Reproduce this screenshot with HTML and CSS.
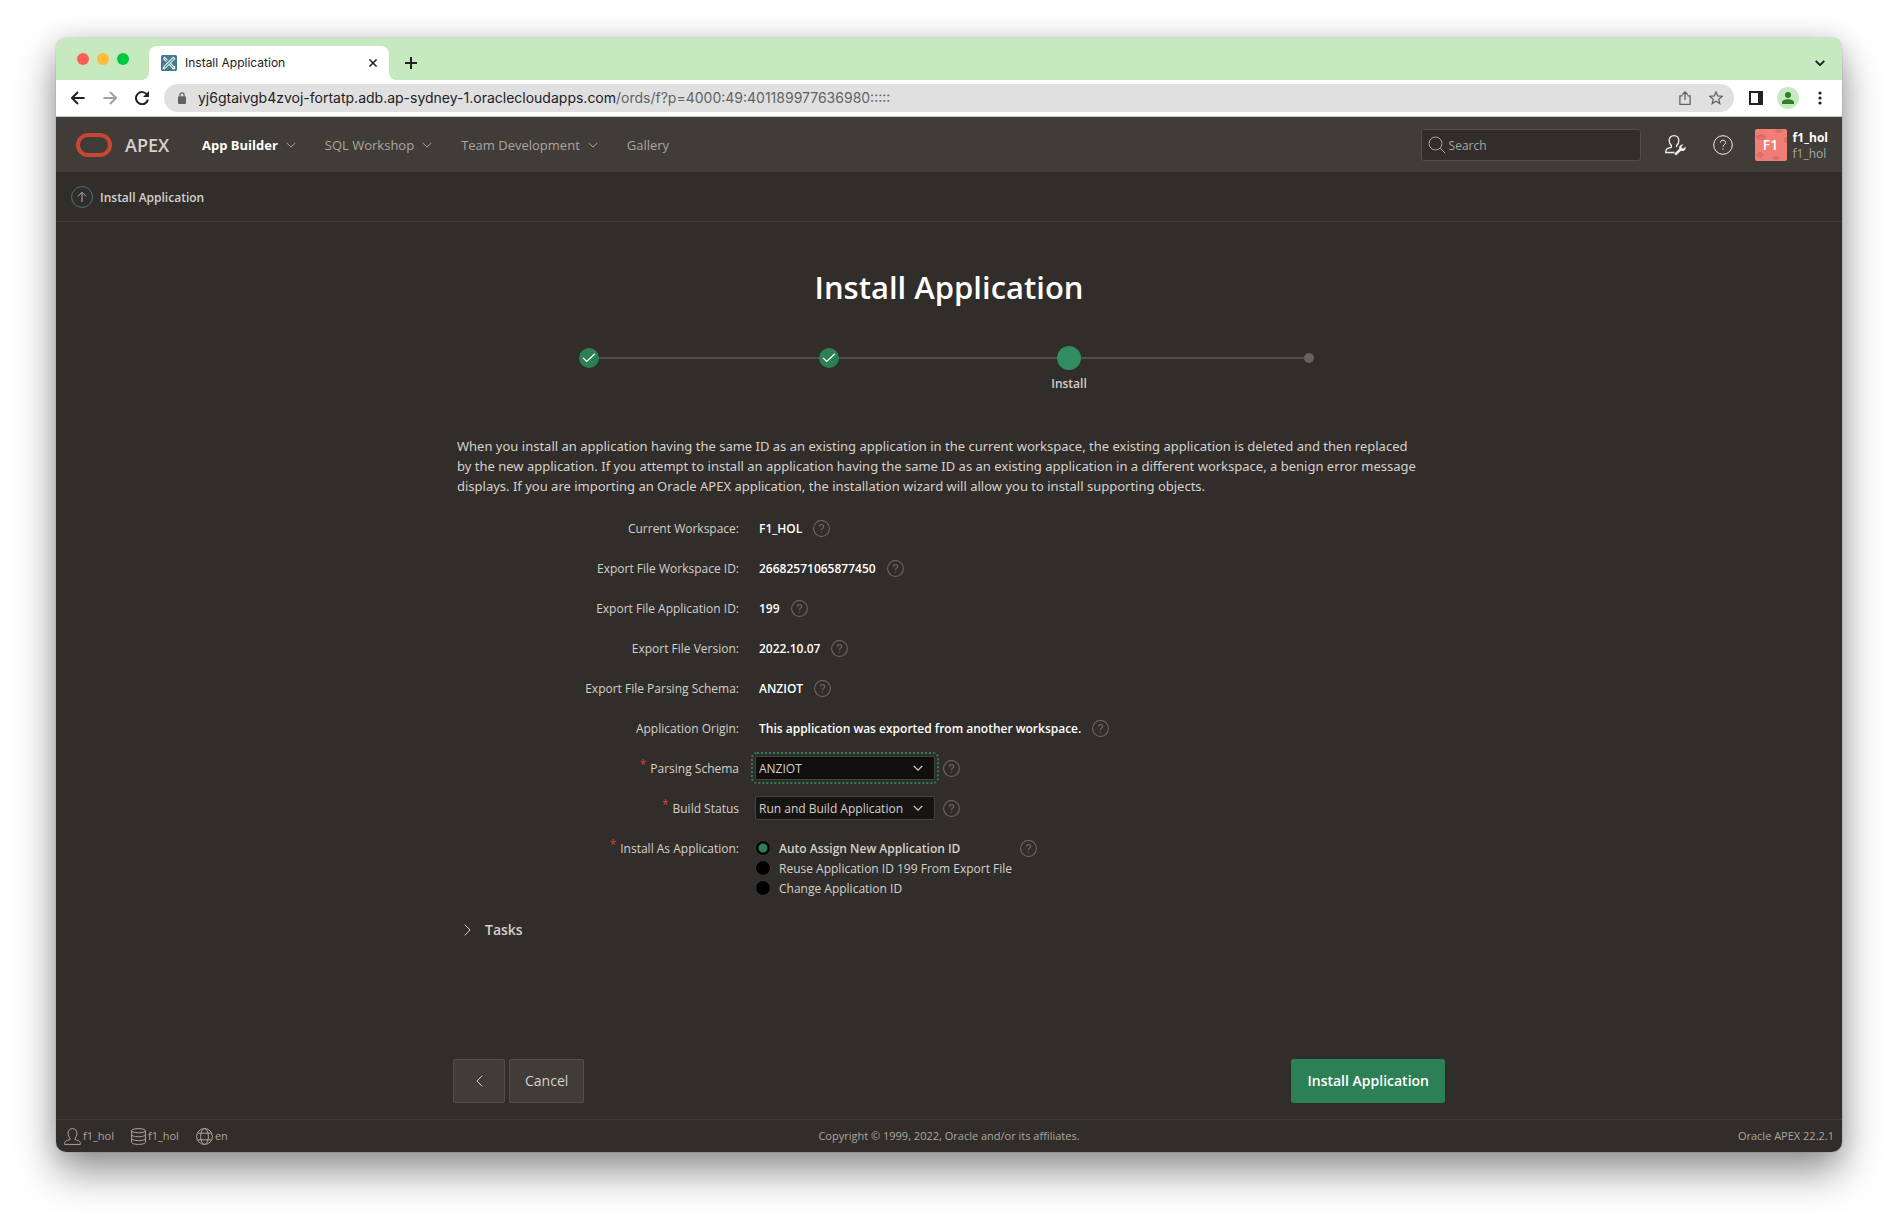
FILE: index.html
```html
<!DOCTYPE html>
<html lang="en">
<head>
<meta charset="utf-8">
<meta name="viewport" content="width=device-width, initial-scale=1">
<title>Install Application</title>
<link rel="stylesheet" href="styles.css">
</head>
<body>
<svg class="sprite" aria-hidden="true">
  <symbol id="i-help" viewBox="0 0 20 20"><circle cx="10" cy="10" r="9.3"/><path d="M7.4 7.7C7.4 6.2 8.5 5.2 10 5.2s2.6 1 2.6 2.4c0 1.9-2.6 2-2.6 4.1M10 13.6v1.2"/></symbol>
  <symbol id="i-down" viewBox="0 0 10 6"><path d="M.7.9 5 5.1 9.3.9"/></symbol>
</svg>
<div class="window">
  <div class="tabstrip">
    <div class="lights"><span class="light red"></span><span class="light amber"></span><span class="light green"></span></div>
    <div class="tab">
      <svg class="favicon" viewBox="0 0 16 16"><rect width="16" height="16" rx="1.5" fill="#457b8c"/><g fill="none" stroke="#e6f0f2" stroke-width="1.1"><path d="M2.4 3.6 3.6 2.4 6.6 5.4M9.6 8.4l4 4-1.2 1.2-4-4M5.4 6.6l-3-3M11 13.6h2.6V11M12.2 2.3l1.5 1.5-9 9-2.3.8.8-2.3zM2.4 12v1.6H4"/></g></svg>
      <span class="tab-title">Install Application</span>
      <button class="plain" aria-label="Close tab"><svg class="close" width="8" height="8" viewBox="0 0 8 8"><path d="m.4.4 7.200 7.200M7.600.4.4 7.600"/></svg></button>
    </div>
    <button class="plain new-tab" aria-label="New tab"><svg class="line" width="12" height="12" viewBox="0 0 12 12"><path d="M6 0v12M0 6h12"/></svg></button>
    <button class="plain tab-search" aria-label="Search tabs"><svg class="line" width="10" height="6" viewBox="0 0 10 6"><use href="#i-down"/></svg></button>
  </div>

  <div class="toolbar">
    <button class="plain nav-btn" aria-label="Back"><svg class="line" width="14" height="14" viewBox="0 0 14 14"><path d="M13.6 7H1.2M7 1 1 7l6 6"/></svg></button>
    <button class="plain nav-btn dim" aria-label="Forward"><svg class="line" width="14" height="14" viewBox="0 0 14 14"><path d="M.4 7h12.4M7 1l6 6-6 6"/></svg></button>
    <button class="plain nav-btn" aria-label="Reload"><svg class="line" width="14" height="14" viewBox="0 0 14 14"><path d="M12.4 4.2A6.1 6.1 0 1 0 13 8.6"/><path class="solid" d="M14 0v6H8z"/></svg></button>
    <div class="omnibox">
      <svg width="8" height="12" viewBox="0 0 8 12"><path fill="#5f6368" d="M1 4.2h6a1 1 0 0 1 1 1V11a1 1 0 0 1-1 1H1a1 1 0 0 1-1-1V5.200a1 1 0 0 1 1-1z"/><path fill="none" stroke="#5f6368" stroke-width="1.200" d="M1.900 4.500V2.900a2.100 2.100 0 0 1 4.200 0v1.600"/></svg>
      <div class="url">yj6gtaivgb4zvoj-fortatp.adb.ap-sydney-1.oraclecloudapps.com<span>/ords/f?p=4000:49:401189977636980:::::</span></div>
      <button class="plain" aria-label="Share"><svg class="thin" width="12" height="14" viewBox="0 0 12 14"><path d="M3.500 4.900H.9v8.400h10.200V4.900H8.500M6 9V1M3.200 3.700 6 .9l2.800 2.800"/></svg></button>
      <button class="plain" aria-label="Bookmark"><svg class="thin" width="14" height="14" viewBox="0 0 14 14"><path d="m7 1 1.700 4 4.400.4-3.300 2.900 1 4.300L7 10.300l-3.800 2.300 1-4.300L.9 5.400 5.300 5z"/></svg></button>
    </div>
    <div class="browser-actions">
      <button class="plain" aria-label="Side panel"><svg width="14" height="14" viewBox="0 0 14 14"><path fill="#202124" fill-rule="evenodd" d="M0 0h14v14H0zM2 2v10h7V2z"/></svg></button>
      <button class="plain profile" aria-label="Profile"><svg width="12" height="12" viewBox="0 0 12 12" fill="#317f2c"><circle cx="6" cy="3" r="3"/><path d="M0 12v-1.700C0 8.300 3 7.200 6 7.200s6 1.100 6 3.100V12z"/></svg></button>
      <button class="plain" aria-label="Menu"><svg width="4" height="14" viewBox="0 0 4 14" fill="#202124"><circle cx="2" cy="2" r="1.600"/><circle cx="2" cy="7" r="1.600"/><circle cx="2" cy="12" r="1.600"/></svg></button>
    </div>
  </div>

  <div class="app">
    <header class="header">
      <a class="brand" href="#"><svg width="36" height="24" viewBox="0 0 36 24"><rect x="2" y="2" width="32" height="20" rx="10" fill="none" stroke="#c74634" stroke-width="4"/></svg>APEX</a>
      <nav class="menu">
        <a href="#" class="active">App Builder<svg class="hair" width="10" height="6"><use href="#i-down"/></svg></a>
        <a href="#">SQL Workshop<svg class="hair" width="10" height="6"><use href="#i-down"/></svg></a>
        <a href="#">Team Development<svg class="hair" width="10" height="6"><use href="#i-down"/></svg></a>
        <a href="#">Gallery</a>
      </nav>
      <label class="search"><svg class="hair" width="18" height="18" viewBox="0 0 18 18"><circle cx="7.500" cy="7.500" r="6.500"/><path d="m12.200 12.200 5 5"/></svg><input type="search" placeholder="Search" aria-label="Search"></label>
      <button class="plain head-btn" aria-label="Administration"><svg width="22" height="22" viewBox="0 0 22 22"><path fill="none" stroke="currentColor" stroke-width="1.300" d="M10.500 18.500H1.700c0-3.400 1.200-4.200 5.600-5.200l.1-1.700C5.900 10.300 5.200 8.600 5.200 6.400c0-2.800 1.800-4.800 4.800-4.800s4.800 2 4.800 4.800c0 2.200-.7 3.900-2.200 5.200l.1 1.500"/><path fill="currentColor" d="m10.300 19.800 5-5a3.400 3.400 0 0 1 4.200-4.200l-2 2 .4 1.600 1.600.4 2-2a3.400 3.400 0 0 1-4.500 4.200l-5 4.800z"/></svg></button>
      <button class="plain head-btn" aria-label="Help"><svg class="hair" width="20" height="20"><use href="#i-help"/></svg></button>
      <div class="account">
        <span class="avatar">F1</span>
        <span class="names"><b>f1_hol</b><span>f1_hol</span></span>
      </div>
    </header>

    <div class="crumb">
      <a class="up" href="#" aria-label="Up"><svg width="22" height="22" viewBox="0 0 22 22" fill="none"><circle cx="11" cy="11" r="10.500" stroke="#41737f"/><path stroke="#b5b0ab" d="M11 16V6.500M7 10.300l4-4 4 4"/></svg></a>
      <b>Install Application</b>
    </div>

    <main class="wizard">
      <h1>Install Application</h1>
      <ol class="steps">
        <li><span class="dot done"><svg width="14" height="10" viewBox="0 0 14 10"><path d="M1 4.800 4.700 8.500 13 .7"/></svg></span></li>
        <li><span class="dot done"><svg width="14" height="10" viewBox="0 0 14 10"><path d="M1 4.800 4.700 8.500 13 .7"/></svg></span></li>
        <li><span class="dot current"></span><b>Install</b></li>
        <li><span class="dot"></span></li>
      </ol>
      <p class="intro">When you install an application having the same ID as an existing application in the current workspace, the existing application is deleted and then replaced<br>by the new application. If you attempt to install an application having the same ID as an existing application in a different workspace, a benign error message<br>displays. If you are importing an Oracle APEX application, the installation wizard will allow you to install supporting objects.</p>

      <form class="form">
        <div class="row"><span class="label">Current Workspace:</span><div class="field"><b>F1_HOL</b><button type="button" class="plain help" aria-label="Help"><svg width="17" height="17"><use href="#i-help"/></svg></button></div></div>
        <div class="row"><span class="label">Export File Workspace ID:</span><div class="field"><b>26682571065877450</b><button type="button" class="plain help" aria-label="Help"><svg width="17" height="17"><use href="#i-help"/></svg></button></div></div>
        <div class="row"><span class="label">Export File Application ID:</span><div class="field"><b>199</b><button type="button" class="plain help" aria-label="Help"><svg width="17" height="17"><use href="#i-help"/></svg></button></div></div>
        <div class="row"><span class="label">Export File Version:</span><div class="field"><b>2022.10.07</b><button type="button" class="plain help" aria-label="Help"><svg width="17" height="17"><use href="#i-help"/></svg></button></div></div>
        <div class="row"><span class="label">Export File Parsing Schema:</span><div class="field"><b>ANZIOT</b><button type="button" class="plain help" aria-label="Help"><svg width="17" height="17"><use href="#i-help"/></svg></button></div></div>
        <div class="row"><span class="label">Application Origin:</span><div class="field"><b>This application was exported from another workspace.</b><button type="button" class="plain help" aria-label="Help"><svg width="17" height="17"><use href="#i-help"/></svg></button></div></div>
        <div class="row"><label class="label" for="schema"><sup>*</sup>Parsing Schema</label><div class="field"><span class="select focused"><select id="schema"><option>ANZIOT</option></select><svg class="line" width="10" height="6"><use href="#i-down"/></svg></span><button type="button" class="plain help" aria-label="Help"><svg width="17" height="17"><use href="#i-help"/></svg></button></div></div>
        <div class="row"><label class="label" for="status"><sup>*</sup>Build Status</label><div class="field"><span class="select"><select id="status"><option>Run and Build Application</option></select><svg class="line" width="10" height="6"><use href="#i-down"/></svg></span><button type="button" class="plain help" aria-label="Help"><svg width="17" height="17"><use href="#i-help"/></svg></button></div></div>
        <div class="row" role="radiogroup" aria-labelledby="install-as">
          <span class="label" id="install-as"><sup>*</sup>Install As Application:</span>
          <div class="field">
            <div class="radios">
              <label><input type="radio" name="as" checked><span>Auto Assign New Application ID</span></label>
              <label><input type="radio" name="as"><span>Reuse Application ID 199 From Export File</span></label>
              <label><input type="radio" name="as"><span>Change Application ID</span></label>
            </div>
            <button type="button" class="plain help" aria-label="Help"><svg width="17" height="17"><use href="#i-help"/></svg></button>
          </div>
        </div>
      </form>

      <button class="plain tasks" aria-expanded="false"><svg class="hair" width="7" height="12" viewBox="0 0 7 12"><path d="m.8.7 5.300 5.300-5.300 5.300"/></svg>Tasks</button>

      <div class="actions">
        <button class="btn back" aria-label="Previous"><svg class="hair" width="7" height="12" viewBox="0 0 7 12"><path d="M6.200.7.9 6l5.300 5.300"/></svg></button>
        <button class="btn">Cancel</button>
        <button class="btn primary">Install Application</button>
      </div>
    </main>

    <footer class="footer">
      <div class="status">
        <span><svg width="17" height="17" viewBox="0 0 17 17"><path d="M.6 16.400h15.800c0-3-1-3.800-5.400-4.700V10c1.300-1.100 1.900-2.400 1.900-4.400C12.900 2.700 11.400.6 8.500.6S4.100 2.700 4.100 5.600c0 2 .6 3.300 1.900 4.400v1.700C1.600 12.600.6 13.400.6 16.400z"/></svg>f1_hol</span>
        <span><svg width="15" height="17" viewBox="0 0 15 17"><ellipse cx="7.500" cy="2.700" rx="6.900" ry="2.100"/><path d="M.6 2.700v11.600c0 1.200 3 2.100 6.900 2.100s6.900-.9 6.900-2.100V2.700M.6 6.600c0 1.200 3 2.100 6.900 2.100s6.900-.9 6.900-2.100M.6 10.500c0 1.200 3 2.100 6.900 2.100s6.900-.9 6.900-2.100"/></svg>f1_hol</span>
        <span><svg width="17" height="17" viewBox="0 0 17 17"><circle cx="8.500" cy="8.500" r="7.900"/><ellipse cx="8.500" cy="8.500" rx="3.900" ry="7.900"/><path d="M1.500 5.200h14M1.500 11.800h14"/></svg>en</span>
      </div>
      <div>Copyright © 1999, 2022, Oracle and/or its affiliates.</div>
      <div class="version">Oracle APEX 22.2.1</div>
    </footer>
  </div>
</div>
</body>
</html>
```
FILE: styles.css
```css
* { box-sizing: border-box; }

body {
  margin: 0;
  min-height: 100vh;
  padding: 38px 56px 74px;
  display: flex;
  flex-direction: column;
  background: #fff;
  font: 12px/20px "Open Sans", "Noto Sans", sans-serif;
}

svg { display: block; flex: none; }
.sprite { position: absolute; width: 0; height: 0; }
a { color: inherit; text-decoration: none; }
b { font-weight: 600; }
button, input, select { font: inherit; color: inherit; }

.plain {
  display: flex;
  align-items: center;
  justify-content: center;
  margin: 0;
  padding: 0;
  border: 0;
  background: none;
}

.line, .close, .thin, .hair { fill: none; stroke: currentColor; }
.line { stroke-width: 2; }
.close { stroke-width: 1.5; }
.thin { stroke-width: 1.3; }
.hair { stroke-width: 1; }
.solid { fill: currentColor; stroke: none; }

/* Browser window */
.window {
  flex: 1;
  display: flex;
  flex-direction: column;
  border-radius: 10px;
  overflow: hidden;
  box-shadow: 0 0 1px rgba(0, 0, 0, .5), 0 20px 40px rgba(0, 0, 0, .42), 0 0 24px rgba(0, 0, 0, .12);
}

.tabstrip {
  display: flex;
  align-items: center;
  height: 42px;
  padding: 8px 17px 0 21px;
  background: #c7e9c0;
  color: #202124;
  font-family: Inter, sans-serif;
}
.lights { display: flex; gap: 8px; width: 72px; padding-bottom: 8px; }
.light { width: 12px; height: 12px; border-radius: 50%; }
.red { background: #ff5d55; }
.amber { background: #ffbb3c; }
.green { background: #00c843; }

.tab {
  position: relative;
  display: flex;
  align-items: center;
  gap: 8px;
  width: 240px;
  height: 34px;
  padding: 0 12px;
  border-radius: 8px 8px 0 0;
  background: #fff;
}
.tab::before, .tab::after {
  content: "";
  position: absolute;
  bottom: 0;
  width: 8px;
  height: 8px;
}
.tab::before { left: -8px; background: radial-gradient(circle at 0 0, transparent 8px, #fff 8px); }
.tab::after { right: -8px; background: radial-gradient(circle at 100% 0, transparent 8px, #fff 8px); }
.favicon { width: 16px; height: 16px; }
.tab-title { flex: 1; }
.new-tab { margin-left: 16px; }
.tab-search { margin-left: auto; }

.toolbar {
  display: flex;
  align-items: center;
  height: 37px;
  padding: 0 20px 0 6px;
  border-bottom: 1px solid #c6c6c6;
  background: #fff;
  color: #202124;
}
.nav-btn { width: 32px; }
.dim { color: #a0a1a3; }
.omnibox {
  flex: 1;
  display: flex;
  align-items: center;
  gap: 18px;
  height: 28px;
  margin-left: 6px;
  padding: 0 11px 0 14px;
  border-radius: 14px;
  background: #e0e0e0;
  color: #5f6368;
}
.url { flex: 1; margin-left: -6px; color: #202124; font: 14px/20px Inter, sans-serif; }
.url span { color: #5f6368; }
.browser-actions { display: flex; align-items: center; gap: 14px; margin-left: 15px; }
.profile { width: 22px; height: 22px; margin-right: 5px; border-radius: 50%; background: #c7e9c0; }

/* Application */
.app { flex: 1; display: flex; flex-direction: column; background: #312d2a; color: #d5d1cd; }

.header {
  display: flex;
  align-items: center;
  height: 55px;
  padding: 0 14px 0 20px;
  background: #403c38;
}
.brand { display: flex; align-items: center; gap: 13px; width: 126px; font-size: 18px; font-weight: 600; }
.menu { display: flex; gap: 29px; flex: 1; color: #aaa6a2; font-size: 13px; }
.menu a { display: flex; align-items: center; gap: 8px; }
.menu .active { color: #fff; font-weight: 700; }
.menu svg { color: #aaa6a2; }
.search {
  display: flex;
  align-items: center;
  gap: 3px;
  width: 220px;
  height: 32px;
  margin-right: 23px;
  padding-left: 6px;
  border: 1px solid #524e49;
  border-radius: 3px;
  background: #312d2a;
  color: #aaa6a2;
}
.search input { width: 100%; padding: 2px 0 0; border: 0; background: none; outline: none; }
.search input::placeholder { color: #aaa6a2; opacity: 1; }
.head-btn { width: 22px; margin-right: 26px; color: #f1efed; }
.head-btn + .head-btn { margin-right: 21px; }
.account { display: flex; align-items: center; gap: 6px; }
.avatar {
  width: 32px;
  height: 32px;
  border-radius: 2px;
  background:
    radial-gradient(ellipse 5px 3px at 6px 8px, #dd6f69 95%, transparent),
    radial-gradient(ellipse 4px 2px at 24px 2px, #dd6f69 95%, transparent),
    radial-gradient(ellipse 4px 3px at 5px 26px, #dd6f69 95%, transparent),
    radial-gradient(ellipse 4px 2px at 21px 29px, #dd6f69 95%, transparent),
    radial-gradient(ellipse 2px 3px at 31px 11px, #dd6f69 95%, transparent),
    #f27d77;
  color: #fff;
  font-size: 14px;
  font-weight: 600;
  line-height: 32px;
  text-align: center;
}
.names { display: flex; flex-direction: column; padding-top: 2px; line-height: 16px; color: #aaa6a2; }
.names b { color: #fff; font-weight: 700; }

.crumb {
  display: flex;
  align-items: center;
  gap: 7px;
  height: 50px;
  padding-left: 15px;
  border-bottom: 1px solid #403c38;
}
.crumb b { padding-top: 2px; }

.wizard {
  flex: 1;
  display: flex;
  flex-direction: column;
  width: 100%;
  max-width: 992px;
  margin: 0 auto;
  padding: 45px 0 16px;
}
h1 { margin: 0 0 39px; color: #fff; font-size: 31px; line-height: 40px; font-weight: 600; text-align: center; }

.steps {
  display: grid;
  grid-template-columns: repeat(4, 240px);
  justify-content: center;
  margin: 0 0 42px;
  padding: 0;
  list-style: none;
}
.steps li {
  position: relative;
  display: grid;
  grid-template-rows: 24px 20px;
  row-gap: 4px;
  place-items: center;
}
.steps li + li::before {
  content: "";
  position: absolute;
  top: 11px;
  right: 50%;
  width: 100%;
  height: 2px;
  background: #524e49;
}
.dot {
  z-index: 1;
  display: grid;
  place-items: center;
  width: 10px;
  height: 10px;
  border-radius: 50%;
  background: #656059;
}
.done { width: 20px; height: 20px; background: #2c8055; }
.done svg { fill: none; stroke: #fff; stroke-width: 1.2; }
.current { width: 24px; height: 24px; background: #318c61; }
.steps li:first-child { z-index: 1; }
.steps li:nth-child(2) .dot, .steps li:nth-child(3) .dot { z-index: 2; }

.intro { margin: 0 0 12px; padding-left: 4px; font-family: "Noto Sans", sans-serif; font-size: 13px; }

.row { display: grid; grid-template-columns: 286px 1fr; column-gap: 16px; min-height: 40px; padding: 11px 0 9px; }
.label { display: flex; justify-content: flex-end; }
.label sup { margin-right: 4px; color: #d8432f; font-size: 12px; line-height: 12px; }
.field { display: flex; align-items: flex-start; height: 20px; }
.field b { padding: 0 11px 0 4px; color: #fff; }
.help { height: 18px; }
.help svg { fill: none; stroke: #716b66; stroke-width: 1.2; }

.select { display: grid; width: 180px; height: 24px; margin: -3px 8px 0 0; align-items: center; }
.select select, .select svg { grid-area: 1 / 1; }
.select select {
  appearance: none;
  width: 100%;
  height: 24px;
  padding: 1px 24px 0 3px;
  border: 1px solid #46423e;
  border-radius: 2px;
  background: #161513;
  outline: none;
}
.select svg { justify-self: end; margin-right: 12px; pointer-events: none; stroke-width: 1.3; }
.focused select { outline: 2px dotted #2c8055; outline-offset: 2px; background: #100f0e; }

.form .row:last-child .field { height: auto; }
.radios { display: flex; flex-direction: column; width: 265px; }
.radios label { display: flex; align-items: flex-start; gap: 8px; }
.radios input {
  appearance: none;
  width: 16px;
  height: 16px;
  margin: 1px 0 0;
  border: 1px solid #3c3835;
  border-radius: 50%;
  background: #000;
}
.radios input:checked { background: radial-gradient(circle, #2c8055 4px, #000 5px); }
.radios input:checked + span { font-weight: 600; }

.tasks { align-self: flex-start; gap: 14px; margin: 12px 0 0 11px; font-size: 14px; font-weight: 600; }

.actions { display: flex; gap: 4px; margin-top: auto; }
.btn {
  height: 44px;
  padding: 0 15px;
  border: 1px solid #524e49;
  border-radius: 2px;
  background: #403c38;
  font-size: 14px;
}
.back { display: grid; place-items: center; width: 52px; }
.primary { margin-left: auto; border-color: #2c8055; background: #2c8055; color: #fff; font-weight: 600; }

.footer {
  display: grid;
  grid-template-columns: 1fr auto 1fr;
  align-items: center;
  height: 33px;
  padding: 0 8px;
  border-top: 1px solid #403c38;
  color: #aaa6a2;
  font-size: 11px;
}
.status { display: flex; gap: 17px; }
.status span { display: flex; align-items: center; gap: 2px; }
.status svg { fill: none; stroke: currentColor; stroke-width: 1; }
.version { text-align: right; }
```
